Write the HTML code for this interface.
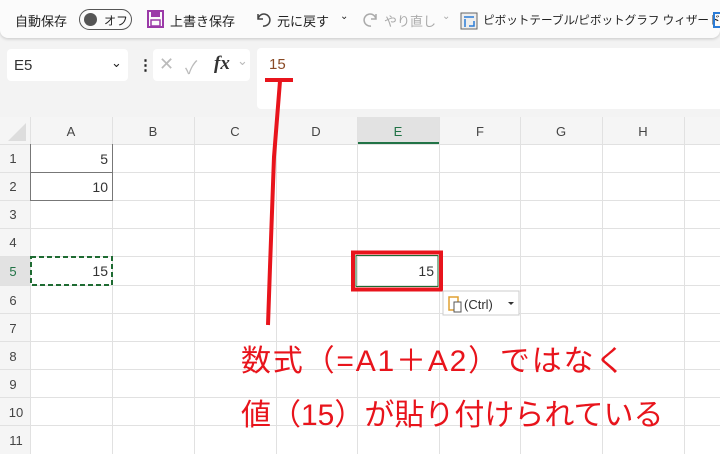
<!DOCTYPE html>
<html><head><meta charset="utf-8"><style>
*{margin:0;padding:0;box-sizing:border-box}
body{width:720px;height:454px;overflow:hidden;background:#f3f3f3;font-family:"Liberation Sans","Noto Sans CJK JP",sans-serif;position:relative;color:#222}
.a{position:absolute}
.tb{left:0;top:0;width:720px;height:38px;background:#fbfbfb;border-radius:0 0 8px 8px;box-shadow:0 1px 3px rgba(0,0,0,.18);font-size:13px}
.tb span{position:absolute;top:11px;white-space:nowrap}
.box{background:#fff;border-radius:4px}
.grid{left:0;top:117px;width:720px;height:337px;background:#fff}
.red{color:#e8141c;font-family:"Liberation Sans","Noto Sans CJK JP",sans-serif;font-size:30px;white-space:nowrap}
</style></head><body>
<div class="a tb">
<span style="left:15px">自動保存</span>
<div class="a" style="left:79px;top:9px;width:53px;height:21px;border:1px solid #555;border-radius:11px"><div class="a" style="left:4px;top:3px;width:13px;height:13px;border-radius:50%;background:#555"></div><span style="left:24px;top:2px;font-size:12px">オフ</span></div>
<svg class="a" style="left:147px;top:10px" width="17" height="18"><rect x="1" y="1" width="15" height="16" fill="none" stroke="#9b3aa8" stroke-width="2"/><rect x="4" y="2" width="9" height="5" fill="#9b3aa8"/><rect x="4" y="10" width="9" height="6" fill="none" stroke="#9b3aa8" stroke-width="1.5"/></svg>
<span style="left:170px">上書き保存</span>
<svg class="a" style="left:254px;top:10px" width="18" height="18"><path d="M4 4 L4 9 L9 9 M4 9 A6 6 0 1 1 9 16" fill="none" stroke="#444" stroke-width="1.5"/></svg>
<span style="left:277px">元に戻す</span><span style="left:340px;font-size:10px">⌄</span>
<svg class="a" style="left:362px;top:10px" width="18" height="18"><path d="M14 4 L14 9 L9 9 M14 9 A6 6 0 1 0 9 16" fill="none" stroke="#aaa" stroke-width="1.5"/></svg>
<span style="left:384px;color:#aaa">やり直し</span><span style="left:442px;color:#aaa;font-size:10px">⌄</span>
<svg class="a" style="left:460px;top:12px" width="18" height="18"><rect x="1" y="1" width="16" height="16" fill="#eee" stroke="#666"/><path d="M4 5h10M5 7v8M9 14h5v-5" stroke="#2a7bd6" stroke-width="1.5" fill="none"/></svg>
<span style="left:483px;font-size:11.6px;top:12px">ピボットテーブル/ピボットグラフ ウィザード</span>
<div class="a" style="left:713px;top:12px;width:10px;height:16px;border:2px solid #2a7bd6"></div>
</div>
<div class="a box" style="left:7px;top:49px;width:121px;height:32px"><span class="a" style="left:7px;top:8px;font-size:15px;color:#333">E5</span><span class="a" style="left:104px;top:6px;font-size:13px">⌄</span></div>
<div class="a" style="left:138px;top:56px;font-weight:bold;font-size:15px">⋮</div>
<div class="a box" style="left:153px;top:49px;width:97px;height:32px;color:#bbb;font-size:18px"><span class="a" style="left:6px;top:5px">✕</span><span class="a" style="left:32px;top:5px">✓</span><span class="a" style="left:61px;top:4px;color:#333;font-family:'Liberation Serif',serif;font-style:italic;font-size:19px;font-weight:bold">fx</span><span class="a" style="left:84px;top:4px;font-size:13px">⌄</span></div>
<div class="a box" style="left:257px;top:48px;width:470px;height:61px"><span class="a" style="left:12px;top:8px;font-size:15px;color:#8a4a25">15</span></div>
<div class="a grid">
<svg class="a" style="left:0;top:0" width="720" height="337">
<rect x="0" y="0" width="720" height="27" fill="#f5f5f5"/>
<rect x="0" y="0" width="30" height="337" fill="#f5f5f5"/>
<rect x="357" y="0" width="82" height="27" fill="#e2e2e2"/>
<rect x="357" y="25" width="82" height="2" fill="#217346"/>
<rect x="0" y="139" width="30" height="29" fill="#e2e2e2"/>
<path d="M8 24 L26 24 L26 6 Z" fill="#ddd"/>
<g stroke="#e1e1e1" stroke-width="1">
<path d="M30.5 0V337M112.5 0V337M194.5 0V337M276.5 0V337M357.5 0V337M439.5 0V337M520.5 0V337M602.5 0V337M684.5 0V337"/>
<path d="M0 27.5H720M0 55.5H720M0 83.5H720M0 111.5H720M0 139.5H720M0 168.5H720M0 196.5H720M0 224.5H720M0 252.5H720M0 280.5H720M0 308.5H720"/>
</g>
<path d="M30.5 27V83.5H112.5V27M30.5 55.5H112.5" stroke="#777" fill="none"/>
<rect x="31" y="140" width="81" height="28" fill="none" stroke="#1e6b32" stroke-width="2" stroke-dasharray="5 3"/>
<rect x="353" y="135.5" width="88" height="37" fill="none" stroke="#e8141c" stroke-width="4"/>
<rect x="356" y="138.5" width="82" height="31" fill="none" stroke="#1e6b32" stroke-width="1"/>
<g font-family="Liberation Sans, sans-serif" font-size="13" fill="#444" text-anchor="middle">
<text x="71" y="19">A</text><text x="153" y="19">B</text><text x="235" y="19">C</text><text x="316" y="19">D</text><text x="398" y="19" fill="#217346">E</text><text x="480" y="19">F</text><text x="561" y="19">G</text><text x="643" y="19">H</text>
<text x="13" y="46">1</text><text x="13" y="74">2</text><text x="13" y="102">3</text><text x="13" y="130">4</text><text x="13" y="159" fill="#217346">5</text><text x="13" y="188">6</text><text x="13" y="216">7</text><text x="13" y="244">8</text><text x="13" y="272">9</text><text x="16" y="300">10</text><text x="16" y="328">11</text>
</g>
<g font-family="Liberation Sans, sans-serif" font-size="14" fill="#333" text-anchor="end">
<text x="108" y="47">5</text><text x="108" y="75">10</text><text x="108" y="159">15</text><text x="434" y="159">15</text>
</g>
<rect x="443" y="174" width="76" height="24" fill="#fff" stroke="#ccc"/>
<rect x="449" y="180" width="9" height="13" fill="none" stroke="#e0a030" stroke-width="1.5"/><rect x="454" y="185" width="7" height="10" fill="#fff" stroke="#555"/>
<text x="464" y="192" font-family="Liberation Sans, sans-serif" font-size="13" fill="#333">(Ctrl)</text>
<path d="M508 185h6l-3 3z" fill="#333"/>
</svg>
</div>
<svg class="a" style="left:0;top:0" width="720" height="454">
<path d="M265 80H293" stroke="#e8141c" stroke-width="4"/>
<path d="M280 81 L274 157 L270 267 L268 325" stroke="#e8141c" stroke-width="4" fill="none"/>
</svg>
<div class="a red" style="left:241px;top:336px;letter-spacing:1.8px">数式（=A1＋A2）ではなく</div>
<div class="a red" style="left:241px;top:390px">値（15）が貼り付けられている</div>
</body></html>
